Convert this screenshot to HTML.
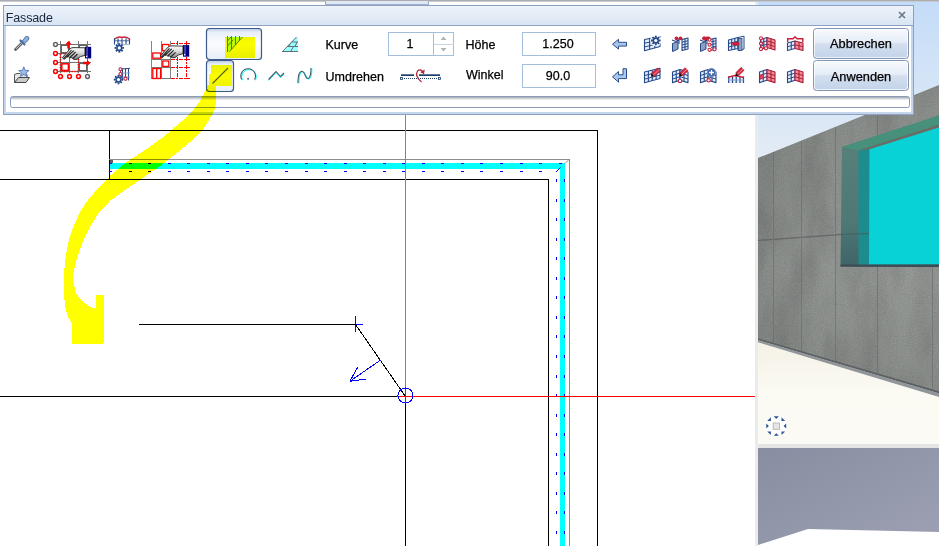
<!DOCTYPE html>
<html><head><meta charset="utf-8"><title>Fassade</title>
<style>
html,body{margin:0;padding:0;}
body{width:939px;height:546px;position:relative;overflow:hidden;background:#fff;font-family:"Liberation Sans",sans-serif;font-size:12px;color:#111;}
.abs{position:absolute;}
#topbar{left:0;top:0;width:939px;height:1px;background:#adadad;}
#topbar2{left:0;top:1px;width:939px;height:1px;background:#c4c9d4;}
#toptab{left:325px;top:1px;width:104px;height:4px;box-sizing:border-box;border:1px solid #9fb0cc;border-top:none;background:#dfe8f5;}
#view3d{left:755px;top:0;width:184px;height:546px;}
#draw{left:0;top:0;width:755px;height:546px;}
#hl{left:0;top:0;width:939px;height:546px;mix-blend-mode:multiply;pointer-events:none;}
#dlg{left:3px;top:5px;width:911px;height:110px;box-sizing:border-box;border:1px solid #8da2c0;background:#fff;}
#title{left:4px;top:6px;width:909px;height:19px;background:linear-gradient(#eef3fa,#d9e5f3);border-bottom:1px solid #8da2c0;}
#title span{position:absolute;left:1.8px;top:4.5px;font-size:12.5px;letter-spacing:-0.15px;color:#1a2740;}
#inner{left:4px;top:26px;width:909px;height:88px;box-sizing:border-box;border:2px solid #c5d6ec;border-top:none;}
.lbl,.box,.btn{-webkit-text-stroke:0.25px currentColor;}
.lbl{position:absolute;font-size:12.5px;color:#000;white-space:nowrap;line-height:14px;}
.box{position:absolute;border:1px solid #a5bcdc;background:#fff;box-sizing:border-box;text-align:center;font-size:12.5px;color:#000;}
.btn{position:absolute;box-sizing:border-box;border:1px solid #8397b5;border-radius:3.5px;background:linear-gradient(#f8fafd 0%,#e6edf7 45%,#d3dfef 52%,#c3d3e9 100%);box-shadow:inset 0 0 0 1px rgba(255,255,255,0.7);text-align:center;font-size:12.8px;color:#000;}
#prog{left:10px;top:96px;width:900px;height:12px;border:1px solid #8a9db8;border-radius:2.5px;background:linear-gradient(#a2a6ad 0px,#dfe1e5 2px,#fff 3.5px);box-sizing:border-box;}

</style></head><body>
<div class="abs" id="view3d">
<svg width="184" height="546" viewBox="755 0 184 546">
<defs>
<linearGradient id="sky" x1="0" y1="0" x2="0" y2="1"><stop offset="0" stop-color="#c3dcf8"/><stop offset="1" stop-color="#e6edf5"/></linearGradient>
<linearGradient id="wallg" x1="0" y1="0" x2="1" y2="0"><stop offset="0" stop-color="#868a87"/><stop offset="0.4" stop-color="#909491"/><stop offset="1" stop-color="#959996"/></linearGradient>
<linearGradient id="wallv" x1="0" y1="0" x2="0" y2="1"><stop offset="0" stop-color="#000" stop-opacity="0.06"/><stop offset="0.6" stop-color="#fff" stop-opacity="0.04"/><stop offset="1" stop-color="#000" stop-opacity="0.05"/></linearGradient>
<linearGradient id="floorg" x1="0" y1="0" x2="0" y2="1"><stop offset="0" stop-color="#f4f1e5"/><stop offset="0.5" stop-color="#fbfaf3"/><stop offset="1" stop-color="#fbfaf4"/></linearGradient>
<linearGradient id="lowg" x1="0" y1="0" x2="1" y2="1"><stop offset="0" stop-color="#888da1"/><stop offset="1" stop-color="#9da1b3"/></linearGradient>
<filter id="noise" x="0" y="0" width="100%" height="100%"><feTurbulence type="fractalNoise" baseFrequency="0.9" numOctaves="2" seed="3" result="n"/><feColorMatrix type="matrix" values="0 0 0 0 0  0 0 0 0 0  0 0 0 0 0  0.5 0.5 0 0 -0.38" /><feComposite in2="SourceGraphic" operator="in"/></filter>
<filter id="blotch" x="0" y="0" width="100%" height="100%"><feTurbulence type="fractalNoise" baseFrequency="0.035 0.012" numOctaves="3" seed="11"/><feColorMatrix type="matrix" values="0 0 0 0 0  0 0 0 0 0  0 0 0 0 0  1.6 0 0 0 -0.62"/><feComposite in2="SourceGraphic" operator="in"/></filter>
</defs>
<rect x="758" y="0" width="181" height="170" fill="url(#sky)"/>
<polygon points="758,340 939,393 939,444 758,444" fill="url(#floorg)"/>
<polygon id="wallp" points="758,158 939,85 939,393 758,340" fill="url(#wallg)"/>
<polygon points="758,158 939,85 939,393 758,340" fill="url(#wallv)"/>
<polygon points="758,158 939,85 939,393 758,340" fill="#000" filter="url(#noise)" opacity="0.28"/>
<polygon points="758,158 939,85 939,393 758,340" fill="#000" filter="url(#blotch)" opacity="0.15"/>
<polygon points="758,338.300 939,391.300 939,393.500 758,340" fill="#5c6062"/>
<polygon points="758,340 939,393.200 939,397 758,342.300" fill="#90959a"/>
<g stroke="#676a69" stroke-width="1" opacity="0.6">
<line x1="758" y1="240.5" x2="841" y2="234.5" stroke="#555857" stroke-width="1.5"/>
<line x1="773.5" y1="152" x2="773.5" y2="343"/>
<line x1="801.5" y1="141" x2="801.5" y2="351"/>
<line x1="835.5" y1="127" x2="835.5" y2="361"/>
<line x1="877.5" y1="266" x2="877.5" y2="373"/>
<line x1="932.5" y1="266" x2="932.5" y2="389"/>
<line x1="877.5" y1="110" x2="877.5" y2="135"/>
</g>
<!-- window -->
<linearGradient id="recg" x1="0" y1="0" x2="0" y2="1"><stop offset="0" stop-color="#5a837c"/><stop offset="0.7" stop-color="#4f7876"/><stop offset="1" stop-color="#3f6468"/></linearGradient>
<polygon points="842,147 939,115.5 939,267 840.5,266" fill="url(#recg)"/>
<polygon points="842,147 939,115.5 939,124.5 858.5,150.5" fill="#47907c"/>
<polygon points="858.5,150.5 939,124.5 939,127.5 869.5,149.5 869,155" fill="#6a6d66"/>
<polygon points="858.5,150.5 869.5,149.5 869,265 858.5,265.5" fill="#1d8c8f"/>
<polygon points="869.5,149.3 939,127.5 939,264.5 869,264.8" fill="#08d2d6"/>
<polygon points="840.5,264.5 939,264.5 939,267 840.5,266.8" fill="#3d4c52"/>
<line x1="840.5" y1="234.5" x2="869" y2="233.5" stroke="#3e6460" stroke-width="1"/>
<!-- separator + lower panel -->
<rect x="758" y="444" width="181" height="4" fill="#e4e4e4"/>
<rect x="758" y="448" width="181" height="98" fill="url(#lowg)"/>
<polygon points="758,545 808,529 939,532 939,546 758,546" fill="#ffffff"/>
<rect x="755" y="0" width="3" height="546" fill="#ebebeb"/>
<!-- nav icon -->
<g id="nav">
<circle cx="776.200" cy="426" r="10.800" fill="#ffffff" opacity="0.920"/>
<rect x="773.200" y="423" width="6.300" height="6.300" fill="#e6e6e6" stroke="#b4b4b4" stroke-width="0.900"/>
<path fill="#2f5597" d="M773.700 416.300h5.200l-2.600 2.600z M773.700 435.800h5.200l-2.600 -2.600z M766.300 423.400v5.200l2.600 -2.600z M786.200 423.400v5.200l-2.600 -2.600z M770.900 417.200v3.700h-3.700z M781.500 417.200v3.700h3.700z M767.200 431.400h3.700v3.700z M785.200 431.400h-3.700v3.700z"/>
</g>
</svg>
</div>
<div class="abs" id="draw">
<svg width="755" height="546" viewBox="0 0 755 546" shape-rendering="crispEdges">
<line x1="0" y1="130.5" x2="598" y2="130.5" stroke="#000" stroke-width="1" />
<line x1="597.5" y1="130" x2="597.5" y2="546" stroke="#000" stroke-width="1" />
<line x1="109.5" y1="130" x2="109.5" y2="180" stroke="#000" stroke-width="1" />
<line x1="0" y1="179.5" x2="549" y2="179.5" stroke="#000" stroke-width="1" />
<line x1="548.5" y1="179" x2="548.5" y2="546" stroke="#000" stroke-width="1" />
<line x1="109" y1="159.5" x2="570" y2="159.5" stroke="#8c8c8c" stroke-width="1" />
<line x1="569.5" y1="159" x2="569.5" y2="546" stroke="#8c8c8c" stroke-width="1" />
<rect x="110" y="160" width="3" height="3" fill="#606060"/>
<rect x="110" y="163" width="455" height="6" fill="#00ffff"/>
<rect x="560" y="163" width="5" height="383" fill="#00ffff"/>
<rect x="109" y="163" width="3" height="1" fill="#0000ff"/>
<rect x="109" y="171" width="3" height="1" fill="#0000ff"/>
<rect x="129" y="163" width="3" height="1" fill="#0000ff"/>
<rect x="129" y="171" width="3" height="1" fill="#0000ff"/>
<rect x="148" y="163" width="3" height="1" fill="#0000ff"/>
<rect x="148" y="171" width="3" height="1" fill="#0000ff"/>
<rect x="168" y="163" width="3" height="1" fill="#0000ff"/>
<rect x="168" y="171" width="3" height="1" fill="#0000ff"/>
<rect x="187" y="163" width="3" height="1" fill="#0000ff"/>
<rect x="187" y="171" width="3" height="1" fill="#0000ff"/>
<rect x="207" y="163" width="3" height="1" fill="#0000ff"/>
<rect x="207" y="171" width="3" height="1" fill="#0000ff"/>
<rect x="226" y="163" width="3" height="1" fill="#0000ff"/>
<rect x="226" y="171" width="3" height="1" fill="#0000ff"/>
<rect x="246" y="163" width="3" height="1" fill="#0000ff"/>
<rect x="246" y="171" width="3" height="1" fill="#0000ff"/>
<rect x="265" y="163" width="3" height="1" fill="#0000ff"/>
<rect x="265" y="171" width="3" height="1" fill="#0000ff"/>
<rect x="285" y="163" width="3" height="1" fill="#0000ff"/>
<rect x="285" y="171" width="3" height="1" fill="#0000ff"/>
<rect x="305" y="163" width="3" height="1" fill="#0000ff"/>
<rect x="305" y="171" width="3" height="1" fill="#0000ff"/>
<rect x="324" y="163" width="3" height="1" fill="#0000ff"/>
<rect x="324" y="171" width="3" height="1" fill="#0000ff"/>
<rect x="344" y="163" width="3" height="1" fill="#0000ff"/>
<rect x="344" y="171" width="3" height="1" fill="#0000ff"/>
<rect x="363" y="163" width="3" height="1" fill="#0000ff"/>
<rect x="363" y="171" width="3" height="1" fill="#0000ff"/>
<rect x="383" y="163" width="3" height="1" fill="#0000ff"/>
<rect x="383" y="171" width="3" height="1" fill="#0000ff"/>
<rect x="402" y="163" width="3" height="1" fill="#0000ff"/>
<rect x="402" y="171" width="3" height="1" fill="#0000ff"/>
<rect x="422" y="163" width="3" height="1" fill="#0000ff"/>
<rect x="422" y="171" width="3" height="1" fill="#0000ff"/>
<rect x="441" y="163" width="3" height="1" fill="#0000ff"/>
<rect x="441" y="171" width="3" height="1" fill="#0000ff"/>
<rect x="461" y="163" width="3" height="1" fill="#0000ff"/>
<rect x="461" y="171" width="3" height="1" fill="#0000ff"/>
<rect x="480" y="163" width="3" height="1" fill="#0000ff"/>
<rect x="480" y="171" width="3" height="1" fill="#0000ff"/>
<rect x="500" y="163" width="3" height="1" fill="#0000ff"/>
<rect x="500" y="171" width="3" height="1" fill="#0000ff"/>
<rect x="520" y="163" width="3" height="1" fill="#0000ff"/>
<rect x="520" y="171" width="3" height="1" fill="#0000ff"/>
<rect x="539" y="163" width="3" height="1" fill="#0000ff"/>
<rect x="539" y="171" width="3" height="1" fill="#0000ff"/>
<rect x="559" y="163" width="3" height="1" fill="#0000ff"/>
<rect x="556" y="179" width="1" height="3" fill="#0000ff"/>
<rect x="564" y="179" width="1" height="3" fill="#0000ff"/>
<rect x="556" y="199" width="1" height="3" fill="#0000ff"/>
<rect x="564" y="199" width="1" height="3" fill="#0000ff"/>
<rect x="556" y="218" width="1" height="3" fill="#0000ff"/>
<rect x="564" y="218" width="1" height="3" fill="#0000ff"/>
<rect x="556" y="238" width="1" height="3" fill="#0000ff"/>
<rect x="564" y="238" width="1" height="3" fill="#0000ff"/>
<rect x="556" y="257" width="1" height="3" fill="#0000ff"/>
<rect x="564" y="257" width="1" height="3" fill="#0000ff"/>
<rect x="556" y="277" width="1" height="3" fill="#0000ff"/>
<rect x="564" y="277" width="1" height="3" fill="#0000ff"/>
<rect x="556" y="296" width="1" height="3" fill="#0000ff"/>
<rect x="564" y="296" width="1" height="3" fill="#0000ff"/>
<rect x="556" y="316" width="1" height="3" fill="#0000ff"/>
<rect x="564" y="316" width="1" height="3" fill="#0000ff"/>
<rect x="556" y="335" width="1" height="3" fill="#0000ff"/>
<rect x="564" y="335" width="1" height="3" fill="#0000ff"/>
<rect x="556" y="355" width="1" height="3" fill="#0000ff"/>
<rect x="564" y="355" width="1" height="3" fill="#0000ff"/>
<rect x="556" y="375" width="1" height="3" fill="#0000ff"/>
<rect x="564" y="375" width="1" height="3" fill="#0000ff"/>
<rect x="556" y="394" width="1" height="3" fill="#0000ff"/>
<rect x="564" y="394" width="1" height="3" fill="#0000ff"/>
<rect x="556" y="414" width="1" height="3" fill="#0000ff"/>
<rect x="564" y="414" width="1" height="3" fill="#0000ff"/>
<rect x="556" y="433" width="1" height="3" fill="#0000ff"/>
<rect x="564" y="433" width="1" height="3" fill="#0000ff"/>
<rect x="556" y="453" width="1" height="3" fill="#0000ff"/>
<rect x="564" y="453" width="1" height="3" fill="#0000ff"/>
<rect x="556" y="472" width="1" height="3" fill="#0000ff"/>
<rect x="564" y="472" width="1" height="3" fill="#0000ff"/>
<rect x="556" y="492" width="1" height="3" fill="#0000ff"/>
<rect x="564" y="492" width="1" height="3" fill="#0000ff"/>
<rect x="556" y="511" width="1" height="3" fill="#0000ff"/>
<rect x="564" y="511" width="1" height="3" fill="#0000ff"/>
<rect x="556" y="531" width="1" height="3" fill="#0000ff"/>
<rect x="564" y="531" width="1" height="3" fill="#0000ff"/>
<line x1="569.5" y1="159" x2="565" y2="163.500" stroke="#8c8c8c" shape-rendering="auto"/>
<line x1="560.5" y1="167.5" x2="556" y2="172" stroke="#0000ff" shape-rendering="auto"/>
<line x1="405.5" y1="115" x2="405.5" y2="388" stroke="#00e000" stroke-width="1" />
<line x1="397" y1="396.5" x2="755" y2="396.5" stroke="#ff0000" stroke-width="1" />
<line x1="405.5" y1="387" x2="405.5" y2="404" stroke="#ff0000" stroke-width="1" />
<line x1="0" y1="396.5" x2="397" y2="396.5" stroke="#000" stroke-width="1" />
<line x1="405.5" y1="404" x2="405.5" y2="546" stroke="#000" stroke-width="1" />
<line x1="348" y1="324.5" x2="363" y2="324.5" stroke="#0000ff" stroke-width="1" />
<line x1="355.5" y1="316" x2="355.5" y2="332" stroke="#0000ff" stroke-width="1" />
<line x1="139" y1="324.5" x2="355" y2="324.5" stroke="#000" stroke-width="1" />
<line x1="355.5" y1="324.5" x2="405.5" y2="396.5" stroke="#000"/>
<circle cx="405.5" cy="395.5" r="7.5" fill="none" stroke="#0000ff"/>
<path d="M381 359.8 L349.8 381.3 M349.8 381.3 L357.9 367 M349.8 381.3 L365.6 379.1" stroke="#0000ff" fill="none"/>
</svg>
</div>
<div class="abs" id="topbar"></div><div class="abs" id="topbar2"></div><div class="abs" id="toptab"></div>
<div class="abs" id="dlg"></div>
<div class="abs" id="title"><span>Fassade</span></div>
<div class="abs" id="inner"></div>
<span class="lbl" style="left:325.5px;top:38px;">Kurve</span>
<span class="lbl" style="left:325.5px;top:70px;">Umdrehen</span>
<span class="lbl" style="left:465.5px;top:38px;">Höhe</span>
<span class="lbl" style="left:466px;top:68px;">Winkel</span>
<div class="box" style="left:388px;top:32px;width:66px;height:24px;"><div class="abs" style="left:44px;top:0;width:1px;height:22px;background:#a5bcdc"></div><div class="abs" style="left:45px;top:11px;width:20px;height:1px;background:#c9d6e8"></div><span class="abs" style="left:0;top:0;width:42px;line-height:22px;">1</span></div>
<div class="box" style="left:522px;top:32px;width:74px;height:24px;line-height:23px;text-indent:-2px;">1.250</div>
<div class="box" style="left:522px;top:64px;width:74px;height:24px;line-height:22px;text-indent:-2px;">90.0</div>
<div class="btn" style="left:813px;top:28px;width:96px;height:31px;line-height:30px;">Abbrechen</div>
<div class="btn" style="left:813px;top:60px;width:96px;height:31px;line-height:31px;">Anwenden</div>
<div class="abs" id="prog"></div>

<svg class="abs" style="left:0;top:0" width="939" height="120" viewBox="0 0 939 120">
<g><line x1="15.500" y1="49.500" x2="23.500" y2="41.500" stroke="#555" stroke-width="2.600" stroke-linecap="round"/><line x1="15.800" y1="49" x2="23" y2="41.800" stroke="#e8e8e8" stroke-width="0.900"/><path d="M20.500 40.500 L24.500 44.500" stroke="#4a6fa5" stroke-width="2.200" stroke-linecap="round"/><path d="M22.200 41.300 L25.600 36.600 Q28.300 35.300 29 38 Q29.500 40 24.800 43.300Z" fill="#8fb0dc" stroke="#4a6fa5" stroke-width="0.900"/></g>
<g><path d="M14.500 82.500 L14.500 74.500 L17 73.500 L20 73.500 L21 74.500 L27 74.500 L27 77" fill="#e8e8e8" stroke="#555" stroke-width="1"/><path d="M14.500 82.500 L18.500 77.500 L29.500 77.500 L26 82.500Z" fill="#c9c9c9" stroke="#444" stroke-width="1" stroke-linejoin="round"/><path d="M23.800 66.800 L25.200 70.300 L29 70.500 L26.100 72.900 L27.100 76.500 L23.800 74.500 L20.500 76.500 L21.500 72.900 L18.600 70.500 L22.400 70.300Z" fill="#9bbbe6" stroke="#4a74b4" stroke-width="0.800" stroke-linejoin="round"/></g>
<g shape-rendering="crispEdges"><rect x="60" y="41" width="1" height="32" fill="#747474"/><rect x="69" y="41" width="1" height="32" fill="#747474"/><rect x="78" y="41" width="1" height="32" fill="#747474"/><rect x="87" y="41" width="1" height="32" fill="#747474"/><rect x="58" y="44" width="33" height="1" fill="#747474"/><rect x="58" y="53" width="33" height="1" fill="#747474"/><rect x="58" y="62" width="33" height="1" fill="#747474"/><rect x="58" y="71" width="33" height="1" fill="#747474"/><rect x="61.500" y="45.500" width="7" height="7" fill="none" stroke="#636363" stroke-width="1.600"/><rect x="79.500" y="63.500" width="7" height="7" fill="#fff" stroke="#636363" stroke-width="1.600"/><rect x="79.500" y="45.500" width="7" height="7" fill="none" stroke="#636363" stroke-width="1.600"/></g>
<rect x="60.500" y="53.500" width="18" height="18" fill="none" stroke="#ff0000" stroke-width="1.700" stroke-dasharray="1.300 1.300"/>
<rect x="61.800" y="63.800" width="6.600" height="6.600" fill="#fff" stroke="#ff0000" stroke-width="1.500"/>
<circle cx="55.5" cy="44.5" r="1.900" fill="#fff" stroke="#666" stroke-width="1.500"/>
<circle cx="87.5" cy="76.5" r="1.900" fill="#fff" stroke="#666" stroke-width="1.500"/>
<circle cx="55.5" cy="53.5" r="1.900" fill="#fff" stroke="#f00" stroke-width="1.500"/>
<circle cx="55.5" cy="62.5" r="1.900" fill="#fff" stroke="#f00" stroke-width="1.500"/>
<circle cx="55.5" cy="71.5" r="1.900" fill="#fff" stroke="#f00" stroke-width="1.500"/>
<circle cx="60.5" cy="76.5" r="1.900" fill="#fff" stroke="#f00" stroke-width="1.500"/>
<circle cx="69.5" cy="76.5" r="1.900" fill="#fff" stroke="#f00" stroke-width="1.500"/>
<circle cx="78.5" cy="76.5" r="1.900" fill="#fff" stroke="#f00" stroke-width="1.500"/>
<path d="M68.500 41 L71.800 44.500 L69.700 44.500 L69.700 48.500 L67.300 48.500 L67.300 44.500 L65.200 44.500Z" fill="#ff0000"/>
<path d="M90.500 63 L87 59.700 L87 61.800 L83 61.800 L83 64.200 L87 64.200 L87 66.300Z" fill="#ff0000"/>
<g transform="translate(62,47)"><defs><linearGradient id="hg62" x1="0" y1="0" x2="0" y2="1"><stop offset="0" stop-color="#ffffff"/><stop offset="0.45" stop-color="#dcdcdc"/><stop offset="1" stop-color="#7c7c7c"/></linearGradient></defs><path d="M0.500 10.5 L8 1.800 Q9.500 0.300 12 0.600 L23 0.800 L23 8.400 L18.500 9.600 L15 12.300 L12 12.400 L9.800 10.800 L7.600 10.800 L6.300 9.600 L4.600 10.200 L2.600 12.200 Q0.800 12.300 0.500 10.500Z" fill="url(#hg62)" stroke="#222" stroke-width="0.9" stroke-linejoin="round"/><path d="M2 11.500 L9.500 3 M4.800 10 L11.800 3.600 M7.800 10.600 L13.600 5 M10.800 11.600 L15.500 7" stroke="#222" stroke-width="1.1" fill="none"/><rect x="23" y="-0.200" width="6.200" height="11.600" fill="#00007e"/><rect x="24.200" y="0.300" width="1.800" height="10.600" fill="#4646ae"/><rect x="24" y="8.800" width="1.200" height="1.200" fill="#fff"/></g>
<g><path d="M114 39.500 Q118 36 122 37.500 Q126 36 130 39.500" fill="none" stroke="#c8203a" stroke-width="1.400"/><line x1="114.5" y1="38.500" x2="114.5" y2="44.500" stroke="#24498a" stroke-width="1.100"/><line x1="118" y1="38.500" x2="118" y2="44.500" stroke="#24498a" stroke-width="1.100"/><line x1="122" y1="38.500" x2="122" y2="44.500" stroke="#24498a" stroke-width="1.100"/><line x1="126" y1="38.500" x2="126" y2="44.500" stroke="#24498a" stroke-width="1.100"/><line x1="129.5" y1="38.500" x2="129.5" y2="44.500" stroke="#24498a" stroke-width="1.100"/><line x1="114" y1="40.800" x2="130" y2="40.800" stroke="#24498a" stroke-width="0.800"/><line x1="122" y1="44.500" x2="130" y2="44.500" stroke="#9db4d8" stroke-width="1"/></g>
<line x1="122.10" y1="47.90" x2="124.00" y2="47.90" stroke="#24498a" stroke-width="1.9"/><line x1="121.28" y1="49.88" x2="122.62" y2="51.22" stroke="#24498a" stroke-width="1.9"/><line x1="119.30" y1="50.70" x2="119.30" y2="52.60" stroke="#24498a" stroke-width="1.9"/><line x1="117.32" y1="49.88" x2="115.98" y2="51.22" stroke="#24498a" stroke-width="1.9"/><line x1="116.50" y1="47.90" x2="114.60" y2="47.90" stroke="#24498a" stroke-width="1.9"/><line x1="117.32" y1="45.92" x2="115.98" y2="44.58" stroke="#24498a" stroke-width="1.9"/><line x1="119.30" y1="45.10" x2="119.30" y2="43.20" stroke="#24498a" stroke-width="1.9"/><line x1="121.28" y1="45.92" x2="122.62" y2="44.58" stroke="#24498a" stroke-width="1.9"/><circle cx="119.3" cy="47.9" r="3.10" fill="#24498a"/><circle cx="119.3" cy="47.9" r="1.6" fill="#fff"/>
<g><line x1="122.5" y1="68.500" x2="122.5" y2="80.500" stroke="#24498a" stroke-width="1.100"/><line x1="125.5" y1="68.500" x2="125.5" y2="80.500" stroke="#24498a" stroke-width="1.100"/><line x1="128.5" y1="68.500" x2="128.5" y2="80.500" stroke="#24498a" stroke-width="1.100"/><line x1="121" y1="69" x2="130" y2="68.300" stroke="#24498a" stroke-width="1"/><line x1="121" y1="73" x2="130" y2="73" stroke="#7f9cc8" stroke-width="0.900"/><line x1="121" y1="77" x2="130" y2="77" stroke="#7f9cc8" stroke-width="0.900"/></g>
<circle cx="120.5" cy="69.3" r="1.5" fill="#fff" stroke="#c8203a" stroke-width="1.1"/>
<circle cx="120.5" cy="74" r="1.5" fill="#fff" stroke="#c8203a" stroke-width="1.1"/>
<circle cx="125.5" cy="78.7" r="1.6" fill="#fff" stroke="#c8203a" stroke-width="1.1"/>
<line x1="120.500" y1="70.800" x2="120.500" y2="72.500" stroke="#c8203a" stroke-width="1"/>
<line x1="121.30" y1="79.60" x2="123.20" y2="79.60" stroke="#24498a" stroke-width="1.9"/><line x1="120.48" y1="81.58" x2="121.82" y2="82.92" stroke="#24498a" stroke-width="1.9"/><line x1="118.50" y1="82.40" x2="118.50" y2="84.30" stroke="#24498a" stroke-width="1.9"/><line x1="116.52" y1="81.58" x2="115.18" y2="82.92" stroke="#24498a" stroke-width="1.9"/><line x1="115.70" y1="79.60" x2="113.80" y2="79.60" stroke="#24498a" stroke-width="1.9"/><line x1="116.52" y1="77.62" x2="115.18" y2="76.28" stroke="#24498a" stroke-width="1.9"/><line x1="118.50" y1="76.80" x2="118.50" y2="74.90" stroke="#24498a" stroke-width="1.9"/><line x1="120.48" y1="77.62" x2="121.82" y2="76.28" stroke="#24498a" stroke-width="1.9"/><circle cx="118.5" cy="79.6" r="3.10" fill="#24498a"/><circle cx="118.5" cy="79.6" r="1.6" fill="#fff"/>
<g shape-rendering="crispEdges"><rect x="151" y="41" width="1" height="38" fill="#858585"/><rect x="161" y="41" width="1" height="38" fill="#858585"/><rect x="170" y="41" width="1" height="38" fill="#858585"/><rect x="151" y="59" width="20" height="1" fill="#777"/><rect x="151" y="67" width="20" height="1" fill="#777"/><rect x="151" y="78" width="20" height="1" fill="#777"/></g>
<rect x="162.3" y="44.5" width="6.6" height="6.2" fill="#fff" stroke="#ff0000" stroke-width="1.300"/>
<rect x="152.8" y="53" width="7.8" height="5.2" fill="#fff" stroke="#ff0000" stroke-width="1.300"/>
<rect x="162.8" y="61" width="6" height="5.4" fill="#fff" stroke="#ff0000" stroke-width="1.300"/>
<rect x="152.8" y="68.5" width="7.8" height="10" fill="#fff" stroke="#ff0000" stroke-width="1.300"/>
<line x1="156.700" y1="68.500" x2="156.700" y2="78.500" stroke="#ff0000" stroke-width="1.400"/>
<g stroke="#ff0000" stroke-width="1.100" stroke-dasharray="4 1.400 1.200 1.400" shape-rendering="crispEdges"><line x1="171" y1="43.5" x2="189.500" y2="43.5"/><line x1="171" y1="59.5" x2="189.500" y2="59.5"/><line x1="171" y1="67.5" x2="189.500" y2="67.5"/><line x1="171" y1="78.5" x2="189.500" y2="78.5"/><line x1="177.5" y1="41" x2="177.5" y2="79"/><line x1="186.5" y1="41" x2="186.5" y2="79"/></g>
<g transform="translate(160,45.3)"><defs><linearGradient id="hg160" x1="0" y1="0" x2="0" y2="1"><stop offset="0" stop-color="#ffffff"/><stop offset="0.45" stop-color="#dcdcdc"/><stop offset="1" stop-color="#7c7c7c"/></linearGradient></defs><path d="M0.500 10.5 L8 1.800 Q9.500 0.300 12 0.600 L23 0.800 L23 8.400 L18.500 9.600 L15 12.300 L12 12.400 L9.800 10.800 L7.600 10.800 L6.300 9.600 L4.600 10.200 L2.600 12.200 Q0.800 12.300 0.500 10.500Z" fill="url(#hg160)" stroke="#222" stroke-width="0.9" stroke-linejoin="round"/><path d="M2 11.500 L9.500 3 M4.800 10 L11.800 3.600 M7.800 10.600 L13.600 5 M10.800 11.600 L15.500 7" stroke="#222" stroke-width="1.1" fill="none"/><rect x="23" y="-0.200" width="6.200" height="11.600" fill="#00007e"/><rect x="24.200" y="0.300" width="1.800" height="10.600" fill="#4646ae"/><rect x="24" y="8.800" width="1.200" height="1.200" fill="#fff"/></g>
<defs><linearGradient id="selg" x1="0" y1="0" x2="0" y2="1"><stop offset="0" stop-color="#b9c9e2"/><stop offset="0.120" stop-color="#e9eff8"/><stop offset="0.500" stop-color="#fbfcfe"/><stop offset="1" stop-color="#e7eef8"/></linearGradient></defs>
<rect x="206.500" y="28.500" width="55" height="31" rx="3" fill="url(#selg)" stroke="#3c5a8c" stroke-width="1.200"/>
<rect x="206.500" y="60.500" width="27" height="31" rx="3" fill="url(#selg)" stroke="#3c5a8c" stroke-width="1.200"/>
<polygon points="227,36.500 242,36.500 229,52 227,52" fill="#b4ffff"/>
<g stroke="#66703a" stroke-width="0.950" fill="none"><path d="M227.500 36 L227.500 52 M229.500 51.500 L242.500 37"/><line x1="231.5" y1="36" x2="231.5" y2="49.5"/><line x1="235.5" y1="36" x2="235.5" y2="45"/><line x1="239.5" y1="36" x2="239.5" y2="40.5"/><path d="M227.500 46 L233.500 39.500 M227.500 41 L231 37"/></g>
<line x1="212.500" y1="83.500" x2="228" y2="68" stroke="#56602c" stroke-width="1.100"/>
<polygon points="282.500,51.500 296,37.500 298,37.500 298,51.500" fill="#9ff"/>
<g stroke="#5f6f78" stroke-width="1" fill="none"><path d="M282 51.500 L298 51.500 M282.500 51.500 L296.500 37"/><path d="M287 46.500 L298 46.500 M291.500 42 L298 42"/><path d="M290.500 51.500 L293.500 46.500 M295 46.500 L297 42 M288.500 46.500 L290.500 43.500"/></g>
<path d="M241.700 79.500 A7.300 7.300 0 1 1 254.600 79.500" fill="none" stroke="#0ff" stroke-width="1" transform="translate(0.800,0.800)"/>
<path d="M241.700 79.500 A7.300 7.300 0 1 1 254.600 79.500" fill="none" stroke="#43596a" stroke-width="1.100"/>
<rect x="247.300" y="78" width="1.600" height="1.600" fill="#43596a"/>
<path d="M268.500 79.500 L276 71.500 L280.500 76.500 L284 73" fill="none" stroke="#0ff" stroke-width="1" transform="translate(0,1)"/>
<path d="M268.500 79.500 L276 71.500 L280.500 76.500 L284 73" fill="none" stroke="#43596a" stroke-width="1.100"/>
<path d="M298 83 C298 74 300 70.500 302.500 71.500 C305.500 72.500 305 79 308 78.500 C310.500 78 311 73 311 68" fill="none" stroke="#0ff" stroke-width="1" transform="translate(0.900,0.500)"/>
<path d="M298 83 C298 74 300 70.500 302.500 71.500 C305.500 72.500 305 79 308 78.500 C310.500 78 311 73 311 68" fill="none" stroke="#43596a" stroke-width="1.100"/>
<g><rect x="401" y="74.300" width="13" height="1.700" fill="#1f3f6e"/><rect x="419" y="74.300" width="21" height="1.700" fill="#1f3f6e"/><line x1="402" y1="78.500" x2="439" y2="78.500" stroke="#1f3f6e" stroke-width="1" stroke-dasharray="1 1"/><rect x="400.500" y="77.500" width="2" height="2" fill="#fff" stroke="#1f3f6e" stroke-width="0.800"/><rect x="438.500" y="77.500" width="2" height="2" fill="#fff" stroke="#1f3f6e" stroke-width="0.800"/><path d="M421.500 82 Q414.500 76 417.500 71 Q420.500 68.500 423 72" fill="none" stroke="#b0283c" stroke-width="1.300"/><path d="M424.800 69.500 L424 74.200 L420.300 72.300Z" fill="#b0283c"/></g>
<path d="M440.500 40 L443.500 36.500 L446.500 40Z" fill="#b4b4b4"/><path d="M440.500 48 L443.500 51.500 L446.500 48Z" fill="#b4b4b4"/>
<path d="M612.500 44.200 L618.500 39.300 L618.500 42.300 L626.500 42.300 L626.500 46.100 L618.500 46.100 L618.500 49.100Z" fill="#a9c7ec" stroke="#2b4f8a" stroke-width="1" stroke-linejoin="round"/>
<path d="M612.500 76.800 L618.500 71.500 L618.500 74.800 L623 74.800 L623 68.700 L626.500 68.700 L626.500 78.600 L618.500 78.600 L618.500 82.200Z" fill="#a9c7ec" stroke="#2b4f8a" stroke-width="1" stroke-linejoin="round"/>
<polygon points="644.5,39.5 660,36.5 660,46.5 644.5,50.7" fill="#e4edf8" stroke="#24498a" stroke-width="1.1" stroke-linejoin="round"/><line x1="649.67" y1="38.50" x2="649.67" y2="49.30" stroke="#24498a" stroke-width="1.1"/><line x1="654.83" y1="37.50" x2="654.83" y2="47.90" stroke="#24498a" stroke-width="1.1"/><line x1="644.5" y1="43.23" x2="660" y2="39.83" stroke="#24498a" stroke-width="0.99"/><line x1="644.5" y1="46.97" x2="660" y2="43.17" stroke="#24498a" stroke-width="0.99"/>
<circle cx="655.800" cy="40.500" r="5.600" fill="#fff"/>
<line x1="658.70" y1="40.50" x2="660.60" y2="40.50" stroke="#24498a" stroke-width="1.9"/><line x1="657.85" y1="42.55" x2="659.19" y2="43.89" stroke="#24498a" stroke-width="1.9"/><line x1="655.80" y1="43.40" x2="655.80" y2="45.30" stroke="#24498a" stroke-width="1.9"/><line x1="653.75" y1="42.55" x2="652.41" y2="43.89" stroke="#24498a" stroke-width="1.9"/><line x1="652.90" y1="40.50" x2="651.00" y2="40.50" stroke="#24498a" stroke-width="1.9"/><line x1="653.75" y1="38.45" x2="652.41" y2="37.11" stroke="#24498a" stroke-width="1.9"/><line x1="655.80" y1="37.60" x2="655.80" y2="35.70" stroke="#24498a" stroke-width="1.9"/><line x1="657.85" y1="38.45" x2="659.19" y2="37.11" stroke="#24498a" stroke-width="1.9"/><circle cx="655.8" cy="40.5" r="3.20" fill="#24498a"/><circle cx="655.8" cy="40.5" r="1.6" fill="#fff"/>
<polygon points="672.5,43.5 678,41.5 678,49 672.5,51.5" fill="#8ea2c0" stroke="#24498a" stroke-width="1"/>
<path d="M672 40 L676 41.500 L679 39.500 L679 44" fill="none" stroke="#24498a" stroke-width="1.100"/>
<polygon points="682,39.5 688,38 688,49 682,50.5" fill="#e4edf8" stroke="#24498a" stroke-width="1.1" stroke-linejoin="round"/><line x1="685.00" y1="38.75" x2="685.00" y2="49.75" stroke="#24498a" stroke-width="1.1"/><line x1="682" y1="42.25" x2="688" y2="40.75" stroke="#24498a" stroke-width="0.99"/><line x1="682" y1="45.00" x2="688" y2="43.50" stroke="#24498a" stroke-width="0.99"/><line x1="682" y1="47.75" x2="688" y2="46.25" stroke="#24498a" stroke-width="0.99"/>
<circle cx="676.5" cy="38.300" r="1.900" fill="#c8203a"/><circle cx="680.5" cy="38.300" r="1.900" fill="#c8203a"/>
<polygon points="700.5,43.5 706,41.5 706,49 700.5,51.5" fill="#8ea2c0" stroke="#24498a" stroke-width="1"/>
<path d="M700 40 L704 41.500 L707 39.500 L707 44" fill="none" stroke="#24498a" stroke-width="1.100"/>
<polygon points="710,39.5 716,38 716,49 710,50.5" fill="#e4edf8" stroke="#24498a" stroke-width="1.1" stroke-linejoin="round"/><line x1="713.00" y1="38.75" x2="713.00" y2="49.75" stroke="#24498a" stroke-width="1.1"/><line x1="710" y1="42.25" x2="716" y2="40.75" stroke="#24498a" stroke-width="0.99"/><line x1="710" y1="45.00" x2="716" y2="43.50" stroke="#24498a" stroke-width="0.99"/><line x1="710" y1="47.75" x2="716" y2="46.25" stroke="#24498a" stroke-width="0.99"/>
<circle cx="704.5" cy="38.300" r="1.900" fill="#c8203a"/><circle cx="708.5" cy="38.300" r="1.900" fill="#c8203a"/>
<rect x="708" y="38" width="3" height="13" fill="#fff"/>
<circle cx="709.5" cy="39.8" r="1.5" fill="#fff" stroke="#c8203a" stroke-width="1.1"/>
<circle cx="709.5" cy="44.8" r="1.5" fill="#fff" stroke="#c8203a" stroke-width="1.1"/>
<circle cx="709.5" cy="49.8" r="1.6" fill="#fff" stroke="#c8203a" stroke-width="1.1"/>
<circle cx="714.5" cy="49.3" r="1.6" fill="#fff" stroke="#c8203a" stroke-width="1.1"/>
<circle cx="704" cy="38.300" r="1.900" fill="#c8203a"/><circle cx="707" cy="38.300" r="1.900" fill="#c8203a"/>
<polygon points="728.5,40 738,37.5 738,48.5 728.5,50.5" fill="#e4edf8" stroke="#24498a" stroke-width="1.1" stroke-linejoin="round"/><line x1="731.67" y1="39.17" x2="731.67" y2="49.83" stroke="#24498a" stroke-width="1.1"/><line x1="734.83" y1="38.33" x2="734.83" y2="49.17" stroke="#24498a" stroke-width="1.1"/><line x1="728.5" y1="43.50" x2="738" y2="41.17" stroke="#24498a" stroke-width="0.99"/><line x1="728.5" y1="47.00" x2="738" y2="44.83" stroke="#24498a" stroke-width="0.99"/>
<polygon points="738,37.500 744,36.200 744,49 738,50.500" fill="#fff" stroke="#24498a" stroke-width="1"/>
<rect x="738.500" y="38.500" width="3.500" height="12" fill="#8ea2c0" stroke="#24498a" stroke-width="0.800"/>
<rect x="732" y="42" width="7.500" height="3.400" rx="1.700" fill="#c8203a"/>
<polygon points="760.5,39.5 767,37.5 767,47.5 760.5,49.5" fill="#e4edf8" stroke="#24498a" stroke-width="1.1" stroke-linejoin="round"/><line x1="763.75" y1="38.50" x2="763.75" y2="48.50" stroke="#24498a" stroke-width="1.1"/><line x1="760.5" y1="42.83" x2="767" y2="40.83" stroke="#24498a" stroke-width="0.99"/><line x1="760.5" y1="46.17" x2="767" y2="44.17" stroke="#24498a" stroke-width="0.99"/>
<polygon points="767,37.5 775,40 775,50 767,47.5" fill="#f0909c" stroke="#b01c34" stroke-width="1.1" stroke-linejoin="round"/><line x1="771.00" y1="38.75" x2="771.00" y2="48.75" stroke="#b01c34" stroke-width="1.1"/><line x1="767" y1="40.83" x2="775" y2="43.33" stroke="#b01c34" stroke-width="0.99"/><line x1="767" y1="44.17" x2="775" y2="46.67" stroke="#b01c34" stroke-width="0.99"/>
<circle cx="761" cy="38.3" r="1.5" fill="#fff" stroke="#c8203a" stroke-width="1.1"/>
<circle cx="761" cy="43.6" r="1.5" fill="#fff" stroke="#c8203a" stroke-width="1.1"/>
<circle cx="761" cy="49" r="1.6" fill="#fff" stroke="#c8203a" stroke-width="1.1"/>
<circle cx="766" cy="48.3" r="1.6" fill="#fff" stroke="#c8203a" stroke-width="1.1"/>
<line x1="761" y1="40" x2="761" y2="42" stroke="#c8203a" stroke-width="0.900"/><line x1="761" y1="45.200" x2="761" y2="47.300" stroke="#c8203a" stroke-width="0.900"/>
<polygon points="787.5,43 795,41 795,48.5 787.5,50.5" fill="#e4edf8" stroke="#24498a" stroke-width="1.1" stroke-linejoin="round"/><line x1="791.25" y1="42.00" x2="791.25" y2="49.50" stroke="#24498a" stroke-width="1.1"/><line x1="787.5" y1="46.75" x2="795" y2="44.75" stroke="#24498a" stroke-width="0.99"/>
<polygon points="795,41 803,43 803,50.5 795,48.5" fill="#f0909c" stroke="#b01c34" stroke-width="1.1" stroke-linejoin="round"/><line x1="799.00" y1="42.00" x2="799.00" y2="49.50" stroke="#b01c34" stroke-width="1.1"/><line x1="795" y1="44.75" x2="803" y2="46.75" stroke="#b01c34" stroke-width="0.99"/>
<path d="M787.700 42 L787.700 38.700 L793 38.700 L795 36.800 L797 38.700 L802.800 38.700 L802.800 42" fill="none" stroke="#c8203a" stroke-width="1.400"/>
<polygon points="644.5,72 660,68.3 660,78.5 644.5,82.7" fill="#e4edf8" stroke="#24498a" stroke-width="1.1" stroke-linejoin="round"/><line x1="648.38" y1="71.08" x2="648.38" y2="81.65" stroke="#24498a" stroke-width="1.1"/><line x1="652.25" y1="70.15" x2="652.25" y2="80.60" stroke="#24498a" stroke-width="1.1"/><line x1="656.12" y1="69.22" x2="656.12" y2="79.55" stroke="#24498a" stroke-width="1.1"/><line x1="644.5" y1="75.57" x2="660" y2="71.70" stroke="#24498a" stroke-width="0.99"/><line x1="644.5" y1="79.13" x2="660" y2="75.10" stroke="#24498a" stroke-width="0.99"/>
<polygon points="650.80,76.60 654.45,76.25 651.72,73.06" fill="#111"/>
<polygon points="654.45,76.25 660.36,71.20 657.64,68.00 651.72,73.06" fill="#d8283e" stroke="#a81a30" stroke-width="0.6"/>
<line x1="653.28" y1="74.88" x2="659.19" y2="69.83" stroke="#f5a0a8" stroke-width="0.9"/>
<polygon points="672.5,72.0 680,69.5 680,80.3 672.5,82.6" fill="#e4edf8" stroke="#24498a" stroke-width="1.1" stroke-linejoin="round"/><line x1="676.25" y1="70.75" x2="676.25" y2="81.45" stroke="#24498a" stroke-width="1.1"/><line x1="672.5" y1="75.53" x2="680" y2="73.10" stroke="#24498a" stroke-width="0.99"/><line x1="672.5" y1="79.07" x2="680" y2="76.70" stroke="#24498a" stroke-width="0.99"/>
<polygon points="680,69.5 688,72.0 688,82.6 680,80.3" fill="#e4edf8" stroke="#24498a" stroke-width="1.1" stroke-linejoin="round"/><line x1="684.00" y1="70.75" x2="684.00" y2="81.45" stroke="#24498a" stroke-width="1.1"/><line x1="680" y1="73.10" x2="688" y2="75.53" stroke="#24498a" stroke-width="0.99"/><line x1="680" y1="76.70" x2="688" y2="79.07" stroke="#24498a" stroke-width="0.99"/>
<polygon points="679.20,76.20 682.82,75.66 679.94,72.61" fill="#111"/>
<polygon points="682.82,75.66 688.04,70.73 685.16,67.67 679.94,72.61" fill="#d8283e" stroke="#a81a30" stroke-width="0.6"/>
<line x1="681.59" y1="74.36" x2="686.81" y2="69.42" stroke="#f5a0a8" stroke-width="0.9"/>
<circle cx="680" cy="81" r="1.7" fill="#fff" stroke="#c8203a" stroke-width="1.1"/>
<polygon points="700.5,72.0 708,69.5 708,80.3 700.5,82.6" fill="#e4edf8" stroke="#24498a" stroke-width="1.1" stroke-linejoin="round"/><line x1="704.25" y1="70.75" x2="704.25" y2="81.45" stroke="#24498a" stroke-width="1.1"/><line x1="700.5" y1="75.53" x2="708" y2="73.10" stroke="#24498a" stroke-width="0.99"/><line x1="700.5" y1="79.07" x2="708" y2="76.70" stroke="#24498a" stroke-width="0.99"/>
<polygon points="708,69.5 716,72.0 716,82.6 708,80.3" fill="#e4edf8" stroke="#24498a" stroke-width="1.1" stroke-linejoin="round"/><line x1="712.00" y1="70.75" x2="712.00" y2="81.45" stroke="#24498a" stroke-width="1.1"/><line x1="708" y1="73.10" x2="716" y2="75.53" stroke="#24498a" stroke-width="0.99"/><line x1="708" y1="76.70" x2="716" y2="79.07" stroke="#24498a" stroke-width="0.99"/>
<circle cx="711.500" cy="72.500" r="4.200" fill="#3d64a8" stroke="#8fa8d0" stroke-width="0.800"/><path d="M709 72.500h5M711.500 70v5" stroke="#fff" stroke-width="1.300"/>
<circle cx="708.6" cy="80.3" r="1.7" fill="#fff" stroke="#c8203a" stroke-width="1.1"/>
<g><rect x="728.500" y="77.500" width="15" height="5.500" fill="#e4edf8"/><line x1="728.7" y1="76.500" x2="728.7" y2="83" stroke="#24498a" stroke-width="1.200"/><line x1="732.5" y1="76.500" x2="732.5" y2="83" stroke="#24498a" stroke-width="1.200"/><line x1="736.2" y1="76.500" x2="736.2" y2="83" stroke="#24498a" stroke-width="1.200"/><line x1="740" y1="76.500" x2="740" y2="83" stroke="#24498a" stroke-width="1.200"/><line x1="743.5" y1="76.500" x2="743.5" y2="83" stroke="#24498a" stroke-width="1.200"/><line x1="728" y1="80" x2="744" y2="80" stroke="#7f9cc8" stroke-width="0.800"/><path d="M728 77.300 L735 75.600 L744 77.600" fill="none" stroke="#c8203a" stroke-width="1.500"/></g>
<polygon points="735.30,76.20 738.90,75.54 735.91,72.59" fill="#111"/>
<polygon points="738.90,75.54 744.09,70.27 741.11,67.33 735.91,72.59" fill="#d8283e" stroke="#a81a30" stroke-width="0.6"/>
<line x1="737.62" y1="74.27" x2="742.81" y2="69.01" stroke="#f5a0a8" stroke-width="0.9"/>
<polygon points="759.5,72.0 767,69.5 767,80.3 759.5,82.6" fill="#e4edf8" stroke="#24498a" stroke-width="1.1" stroke-linejoin="round"/><line x1="763.25" y1="70.75" x2="763.25" y2="81.45" stroke="#24498a" stroke-width="1.1"/><line x1="759.5" y1="75.53" x2="767" y2="73.10" stroke="#24498a" stroke-width="0.99"/><line x1="759.5" y1="79.07" x2="767" y2="76.70" stroke="#24498a" stroke-width="0.99"/>
<polygon points="767,69.5 775,72.0 775,82.6 767,80.3" fill="#f0909c" stroke="#b01c34" stroke-width="1.1" stroke-linejoin="round"/><line x1="771.00" y1="70.75" x2="771.00" y2="81.45" stroke="#b01c34" stroke-width="1.1"/><line x1="767" y1="73.10" x2="775" y2="75.53" stroke="#b01c34" stroke-width="0.99"/><line x1="767" y1="76.70" x2="775" y2="79.07" stroke="#b01c34" stroke-width="0.99"/>
<polygon points="760,75.300 763.600,74.500 763.600,78.300 760,79.200" fill="#e04858" stroke="#c8203a" stroke-width="0.600"/>
<polygon points="787.5,72.0 795,69.5 795,80.3 787.5,82.6" fill="#e4edf8" stroke="#24498a" stroke-width="1.1" stroke-linejoin="round"/><line x1="791.25" y1="70.75" x2="791.25" y2="81.45" stroke="#24498a" stroke-width="1.1"/><line x1="787.5" y1="75.53" x2="795" y2="73.10" stroke="#24498a" stroke-width="0.99"/><line x1="787.5" y1="79.07" x2="795" y2="76.70" stroke="#24498a" stroke-width="0.99"/>
<polygon points="795,69.5 803,72.0 803,82.6 795,80.3" fill="#f0909c" stroke="#b01c34" stroke-width="1.1" stroke-linejoin="round"/><line x1="799.00" y1="70.75" x2="799.00" y2="81.45" stroke="#b01c34" stroke-width="1.1"/><line x1="795" y1="73.10" x2="803" y2="75.53" stroke="#b01c34" stroke-width="0.99"/><line x1="795" y1="76.70" x2="803" y2="79.07" stroke="#b01c34" stroke-width="0.99"/>
<path d="M899 12 L905 18 M905 12 L899 18" stroke="#6c7a8c" stroke-width="1.700"/>
</svg>
<div class="abs" id="hl">
<svg width="939" height="546" viewBox="0 0 939 546" shape-rendering="crispEdges">
<rect x="225" y="37" width="30" height="21" fill="#ffff00"/>
<polygon fill="#ffff00" points="211,65 232,65 232,86 216,86 215.800,104 214.900,108.800 211.500,115.800 203.600,128.600 190.800,141.400 175.400,154.200 158.700,167 142,178.600 126.700,188.800 110.500,200.400 98.400,213.400 91,225.200 85.200,236.900 80.200,248.600 76.400,260.300 73.400,272 72.900,280.800 75.800,292.600 80.800,299.900 88.100,305.700 96,309 96,294.700 104.300,294.700 104.300,341.500 102.500,344 72,344 72,323.300 68.200,317.500 65.200,307.200 64.100,295.500 64.100,277.900 64.700,263.300 67,248.600 69.900,236.900 74,225.200 79.300,213.400 86.600,201.700 98.500,187.600 111.300,174.700 126.700,161.900 144.600,150.400 162.600,137.600 179.200,123.500 190.800,113.200 200.800,99.900 204.600,92.200 206.800,88 206.800,85 208.500,85 208.500,74.200 211,74.200"/>
</svg>

</div>
</body></html>
